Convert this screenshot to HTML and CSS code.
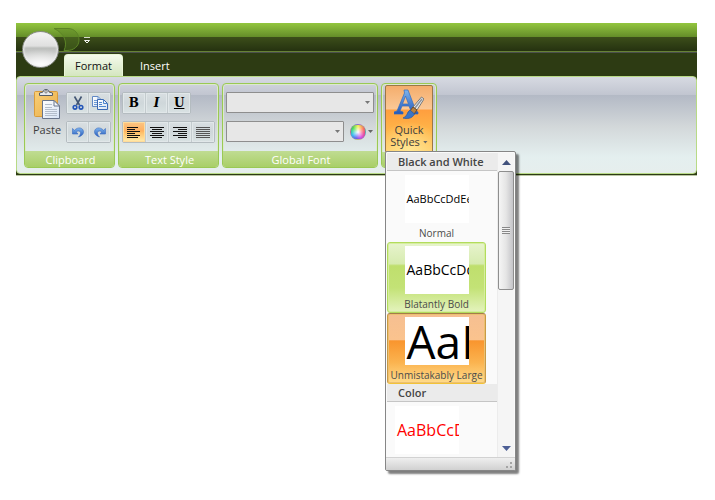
FILE: index.html
```html
<!DOCTYPE html>
<html lang="en">
<head>
<meta charset="utf-8">
<title>Ribbon</title>
<link rel="stylesheet" href="styles.css">
</head>
<body>
<svg class="defs" aria-hidden="true">
  <defs>
    <linearGradient id="blue" x1="0" y1="0" x2="0" y2="1"><stop offset="0" stop-color="#7db4ee"/><stop offset="1" stop-color="#2358b8"/></linearGradient>
    <linearGradient id="board" x1="0" y1="0" x2="1" y2="1"><stop offset="0" stop-color="#f9cf78"/><stop offset="1" stop-color="#eaae48"/></linearGradient>
    <linearGradient id="page" x1="0" y1="0" x2="1" y2="1"><stop offset="0" stop-color="#ffffff"/><stop offset="1" stop-color="#d5e2f4"/></linearGradient>
  </defs>
</svg>
<main class="ribbon">
  <header class="titlebar">
    <svg class="swoosh" width="28" height="24" viewBox="0 0 28 24" aria-hidden="true"><path d="M1 .5H15C22 .5 26 6 26 12S21 22.500 14 22.500H11C15 14 11 5 1 .5Z" fill="#588022" fill-opacity=".4" stroke="#5c8526"/></svg>
    <button class="customize" aria-label="Customize Quick Access Toolbar"><svg width="6" height="7" viewBox="0 0 6 7"><path d="M0 .5H6" stroke="#d3d9ca"/><path d="M.5 3.500H5.500L3 6Z" fill="#39461f" stroke="#f3f5ee"/></svg></button>
  </header>
  <button class="orb" aria-label="Application menu"></button>
  <nav class="tabs">
    <button class="tab active">Format</button>
    <button class="tab">Insert</button>
  </nav>
  <div class="panel">
    <section class="group clipboard">
      <div class="body">
        <button class="paste">
          <svg width="26" height="31" viewBox="0 0 26 31" aria-hidden="true">
            <rect x=".5" y="2.500" width="23" height="25" rx="1" fill="url(#board)" stroke="#d99c3c"/>
            <path d="M5.500 6.500V4L9 3C9-.3 15-.3 15 3L18.500 4V6.500Z" fill="#e6e9ed" stroke="#555d68"/>
            <circle cx="12" cy="2.800" r="1.200" fill="#fff" stroke="#777"/>
            <path d="M8.500 11.500H20L25.500 17V29.500H8.500Z" fill="url(#page)" stroke="#69758b"/>
            <path d="M20 11.500V17H25.500Z" fill="#f3f7fc" stroke="#69758b"/>
            <path d="M11 15.500H18M11 18.500H18M11 20.500H23M11 22.500H23M11 24.500H23M11 26.500H23" stroke="#b3bdcb"/>
          </svg>
          <span>Paste</span>
        </button>
        <div class="rows">
          <div class="strip">
            <button aria-label="Cut"><svg width="12" height="16" viewBox="0 0 12 16"><path d="M2.500 1.500L7.500 10M9.500 1.500L4.500 10" fill="none" stroke="#435674" stroke-width="1.600"/><circle cx="3" cy="12.300" r="1.800" fill="none" stroke="#2455b8" stroke-width="1.600"/><circle cx="9" cy="12.300" r="1.800" fill="none" stroke="#2455b8" stroke-width="1.600"/></svg></button>
            <button aria-label="Copy"><svg width="16" height="16" viewBox="0 0 16 16"><path d="M.5 1.500H6L9.500 5V11.500H.5Z" fill="url(#page)" stroke="#6288c4"/><path d="M6 1.500V5H9.500M2 5.500H5M2 7.500H7M2 9.500H7" fill="none" stroke="#6d99d4"/><path d="M5.500 4.500H11.500L15.500 8.500V14.500H5.500Z" fill="url(#page)" stroke="#3b68b3"/><path d="M11.500 4.500V8.500H15.500M7 7.500H10M7 9.500H10M7 11.500H14" fill="none" stroke="#4f87cf"/></svg></button>
          </div>
          <div class="strip">
            <button aria-label="Undo"><svg width="12" height="12" viewBox="0 0 12 12"><path d="M.5 2.500V8H6L4.200 6C6 4.200 9 5 8.500 7.500C8.200 9 7.500 10 6.500 11C10 10 11.700 8 11.500 5.500C11 1.500 6 .5 2.500 4.300Z" fill="url(#blue)" stroke="#3b6bc1" stroke-width=".6"/></svg></button>
            <button aria-label="Redo"><svg width="12" height="12" viewBox="0 0 12 12"><path d="M11.500 2.500V8H6L7.800 6C6 4.200 3 5 3.500 7.500C3.800 9 4.500 10 5.500 11C2 10 .3 8 .5 5.500C1 1.500 6 .5 9.500 4.300Z" fill="url(#blue)" stroke="#3b6bc1" stroke-width=".6"/></svg></button>
          </div>
        </div>
      </div>
      <h2>Clipboard</h2>
    </section>
    <section class="group textstyle">
      <div class="body rows">
        <div class="strip three">
          <button class="glyph">B</button>
          <button class="glyph italic">I</button>
          <button class="glyph underline">U</button>
        </div>
        <div class="strip four">
          <button class="on" aria-label="Align left"><svg width="14" height="11" viewBox="0 0 14 11"><path d="M0 .5H11M0 2.500H8M0 4.500H13M0 6.500H8M0 8.500H13M0 10.500H11" stroke="#111"/></svg></button>
          <button aria-label="Center"><svg width="14" height="11" viewBox="0 0 14 11"><path d="M0 .5H14M2 2.500H12M0 4.500H14M2 6.500H12M0 8.500H14M2 10.500H12" stroke="#111"/></svg></button>
          <button aria-label="Align right"><svg width="14" height="11" viewBox="0 0 14 11"><path d="M0 .5H14M5 2.500H14M0 4.500H14M5 6.500H14M0 8.500H14M5 10.500H14" stroke="#111"/></svg></button>
          <button aria-label="Justify"><svg width="14" height="11" viewBox="0 0 14 11"><path d="M0 .5H14M0 2.500H14M0 4.500H14M0 6.500H14M0 8.500H14M0 10.500H14" stroke="#555"/></svg></button>
        </div>
      </div>
      <h2>Text Style</h2>
    </section>
    <section class="group font">
      <div class="body rows">
        <div class="combo"><select aria-label="Font family"><option></option></select></div>
        <div class="line">
          <div class="combo"><select aria-label="Font size"><option></option></select></div>
          <button class="color" aria-label="Font color"><span class="wheel"></span><span class="down"></span></button>
        </div>
      </div>
      <h2>Global Font</h2>
    </section>
    <section class="group styles">
      <div class="body">
        <button class="quick">
          <svg width="30" height="31" viewBox="0 0 30 31" aria-hidden="true">
            <path fill-rule="evenodd" d="M10 1H14L22 22L24 23V25H14V23L17 22L15 17H8L6 22L9 23V25H0V23L3 22L10.500 4ZM11.500 7L8.500 15H14.500Z" fill="url(#blue)" stroke="#326cc0" stroke-width=".7"/>
            <path d="M27.500 8L30 10L23 21L19 18Z" fill="#e7e8ea" stroke="#777"/>
            <path d="M28 10L21 19" stroke="#8e9299" stroke-width="1.500"/>
            <path d="M19 18L23 21L20 25L16 22Z" fill="#b98140" stroke="#6f4d29"/>
            <path d="M16 21L20.500 25C18 30 13 30 9 29C13 28 13 23 16 21Z" fill="#3b75c6" stroke="#2858a1" stroke-width=".7"/>
          </svg>
          <span>Quick</span>
          <span class="more">Styles <i class="down"></i></span>
        </button>
      </div>
      <h2></h2>
      <div class="popup">
        <div class="view">
          <div class="gallery">
            <h3>Black and White</h3>
            <button class="item"><span class="sample normal">AaBbCcDdEe</span><span class="name">Normal</span></button>
            <button class="item hover"><span class="sample bold">AaBbCcDdEe</span><span class="name">Blatantly Bold</span></button>
            <button class="item selected"><span class="sample large">AaB</span><span class="name">Unmistakably Large</span></button>
            <h3>Color</h3>
            <button class="item narrow"><span class="sample red">AaBbCcDdEe</span></button>
          </div>
          <div class="scrollbar">
            <button class="up" aria-label="Scroll up"><svg width="9" height="5" viewBox="0 0 9 5"><path d="M0 5L4.500 0L9 5Z" fill="#42527d"/></svg></button>
            <div class="thumb"><span></span></div>
            <button class="dn" aria-label="Scroll down"><svg width="9" height="5" viewBox="0 0 9 5"><path d="M0 0L4.500 5L9 0Z" fill="#4d5f95"/></svg></button>
          </div>
        </div>
        <div class="grip"><svg width="8" height="8" viewBox="0 0 8 8" aria-hidden="true"><path d="M5 1H7V3H5ZM5 5H7V7H5ZM1 5H3V7H1Z" fill="#a4a4a4"/></svg></div>
      </div>
    </section>
  </div>
</main>
</body>
</html>
```

FILE: styles.css
```css
* { box-sizing: border-box; }
body {
  min-height: 100vh;
  margin: 0;
  padding: 23px 18px 0 16px;
  background: #fff;
  color: #3d3d3d;
  font: 11px/12px "Open Sans", "Noto Sans", sans-serif;
}
button {
  display: flex;
  align-items: center;
  justify-content: center;
  margin: 0;
  padding: 0;
  border: 0;
  background: none;
  color: inherit;
  font: inherit;
}
svg { display: block; flex: none; }
h2, h3 { margin: 0; font-size: 11px; }
.defs { position: absolute; width: 0; height: 0; }

.ribbon {
  position: relative;
  background: #2d3b13;
  border-bottom: 1px solid #b9c6a4;
}
.titlebar {
  display: flex;
  height: 30px;
  padding: 5px 0 0 37px;
  gap: 3px;
  border-bottom: 1px solid #4b504d;
  background: linear-gradient(#93c63f, #648d29 14px, #3c4e1a 14px, #253210 28px, #668235 28px);
}
.customize { align-self: flex-start; margin-top: 9px; }
.orb {
  position: absolute;
  left: 6px;
  top: 8px;
  width: 37px;
  height: 37px;
  border: 1px solid #8a8d88;
  border-radius: 50%;
  background: radial-gradient(ellipse 90% 50% at 50% 100%, #fff, #fff0), linear-gradient(#f5f5f5, #dfdfdf 40%, #bcbebc 46%, #e5e5e5 90%);
  box-shadow: inset 0 0 2px 1px #eee;
}
.tabs { display: flex; height: 23px; padding: 1px 0 0 48px; }
.tab { height: 22px; padding: 1px 10px 0; color: #fff; }
.tab + .tab { padding: 1px 17px 0; }
.tab.active {
  border: 1px solid #e9f5d7;
  border-bottom: 0;
  border-radius: 4px 4px 0 0;
  background: linear-gradient(#f4faec, #d5e6c0);
  color: #111;
}
.panel {
  display: flex;
  gap: 3px;
  padding: 6px 7px 5px;
  border: 1px solid #b8da86;
  border-radius: 4px;
  background: linear-gradient(#d7dae2, #c1c5d0 18px, #b3b9c5 18px, #d3d8da 50px, #e4efef 80px, #e6eeed);
}
.ribbon::after { content: ""; display: block; height: 1px; }
.group {
  position: relative;
  display: flex;
  flex-direction: column;
  height: 85px;
  border: 1px solid #9ac954;
  border-radius: 4px;
  box-shadow: inset 0 0 0 1px #dce9cd;
}
.group h2 {
  height: 16px;
  padding-left: 2px;
  border-radius: 0 0 3px 3px;
  background: linear-gradient(#c0dc92, #a9cf68);
  color: #fff;
  font-weight: 400;
  line-height: 18px;
  text-align: center;
}
.body { height: 68px; padding: 8px 3px 0; }
.clipboard { width: 91px; }
.clipboard .body { display: flex; justify-content: space-between; }
.textstyle { width: 101px; }
.font { width: 156px; }
.styles { width: 56px; }
.rows { display: flex; flex-direction: column; gap: 7px; }
.paste { flex-direction: column; justify-content: flex-start; gap: 4px; margin: -3px 0 0 5px; align-self: flex-start; }
.strip {
  display: flex;
  width: 45px;
  height: 22px;
  border: 1px solid #b4bcc0;
  border-radius: 2px;
  background: linear-gradient(#d9dfe2, #cfd7da 50%, #d9e2e3);
}
.strip.three { width: 69px; }
.strip.four { width: 93px; }
.strip button { flex: 1; box-shadow: inset 0 0 0 1px #e1e7e9; }
.strip button + button { border-left: 1px solid #c3cbce; }
.strip .on { background: linear-gradient(#fbc583, #ffb060 45%, #ffbd65 50%, #ffeeb0); box-shadow: inset 0 0 0 1px #ffdb9a; }
.glyph { color: #000; font: bold 12px/14px "DejaVu Serif", serif; }
.italic { font-style: italic; }
.underline { text-decoration: underline; }
.combo { position: relative; flex: 1 1 auto; }
.font > .rows > .combo { flex: none; }
.combo select {
  display: block;
  width: 100%;
  height: 21px;
  border: 1px solid #8e8e8e;
  border-radius: 1px;
  background: #e7e7e7;
  appearance: none;
}
.combo::after {
  content: "";
  position: absolute;
  right: 4px;
  top: 9px;
  width: 5px;
  height: 3px;
  background: #777;
  clip-path: polygon(0 0, 100% 0, 50% 100%);
}
.font .rows { gap: 8px; }
.line { display: flex; gap: 6px; }
.color { gap: 2px; margin-right: 1px; }
.wheel {
  width: 16px;
  height: 16px;
  border: 1px solid #8b7ea880;
  border-radius: 50%;
  background: radial-gradient(circle, #fff, #fff0 65%), conic-gradient(#f6ef50, #ff7057 60deg, #ed4b88 100deg, #d84be4 150deg, #6461ef 195deg, #33baf5 240deg, #35d1a4 275deg, #48dc4e 310deg, #f6ef50);
}
.down { display: inline-block; width: 5px; height: 3px; background: #666; clip-path: polygon(0 0, 100% 0, 50% 100%); }
.styles .body { padding: 1px 3px 0; }
.quick {
  flex-direction: column;
  justify-content: flex-start;
  width: 48px;
  height: 67px;
  padding-top: 3px;
  border: 1px solid #9a7747;
  border-radius: 2px 2px 0 0;
  background: radial-gradient(ellipse 70% 45% at 50% 100%, #ffe793, #ffe79300), linear-gradient(#f4ad6c, #fbc896 23px, #ff9e3e 24px, #ffb348 65%, #ffcb68);
}
.quick svg { margin-bottom: 4px; }
.more { display: flex; align-items: center; gap: 3px; }

.popup {
  position: absolute;
  z-index: 2;
  left: 3px;
  top: 67px;
  width: 131px;
  border: 1px solid #868686;
  border-radius: 2px;
  background: #fafafa;
  box-shadow: 3px 3px 2px #00000080;
}
.view { display: flex; height: 305px; padding: 1px 1px 0; }
.gallery { flex: 1; overflow: hidden; }
.gallery h3 {
  height: 18px;
  padding-left: 11px;
  border-bottom: 1px solid #c5c5c5;
  background: #ebebeb;
  color: #444;
  font-weight: 600;
  line-height: 18px;
}
.item {
  flex-direction: column;
  justify-content: flex-start;
  width: 99px;
  height: 71px;
  padding-top: 3px;
  border: 1px solid transparent;
  border-radius: 3px;
}
.item.narrow { width: 80px; }
.item.hover { border-color: #b2dc5c; background: linear-gradient(#e7f4cd, #d7ebb0 30%, #bfdf6d 33%, #c3e276 65%, #e4f3be); box-shadow: inset 0 0 0 1px #d6eda0; }
.item.selected { border-color: #a47b4b #c99a45 #f3c337; background: linear-gradient(#f6bf91, #fac38e 37%, #f9952e 39%, #fbb34f 70%, #ffdc8c); box-shadow: inset 0 0 0 1px #ecc071; }
.sample {
  width: 64px;
  height: 48px;
  padding-left: 2px;
  overflow: hidden;
  background: #fff;
  color: #000;
  line-height: 48px;
  text-align: left;
}
.normal { font-size: 11px; }
.bold { font-size: 14px; }
.large { font-size: 46px; }
.red { color: #f00; font-size: 16px; }
.name { margin-top: 4px; white-space: nowrap; color: #4b4b4b; font-size: 10px; }
.scrollbar {
  display: flex;
  flex-direction: column;
  width: 17px;
  border-left: 1px solid #ececec;
  background: #f5f5f5;
}
.up { height: 18px; }
.thumb {
  display: flex;
  align-items: center;
  justify-content: center;
  height: 119px;
  border: 1px solid #8e8e8e;
  border-radius: 2px;
  background: linear-gradient(90deg, #f5f5f5, #e5e5e5 50%, #c4c4c8);
}
.thumb span { width: 8px; height: 7px; background: repeating-linear-gradient(#888 0 1px, #f0f0f0 1px 2px); }
.dn { height: 17px; margin-top: auto; }
.grip {
  display: flex;
  align-items: flex-end;
  justify-content: flex-end;
  height: 13px;
  padding: 0 2px 1px 0;
  border-top: 1px solid #d2d2d2;
  background: linear-gradient(#efefef, #d1d1d1);
}
```
